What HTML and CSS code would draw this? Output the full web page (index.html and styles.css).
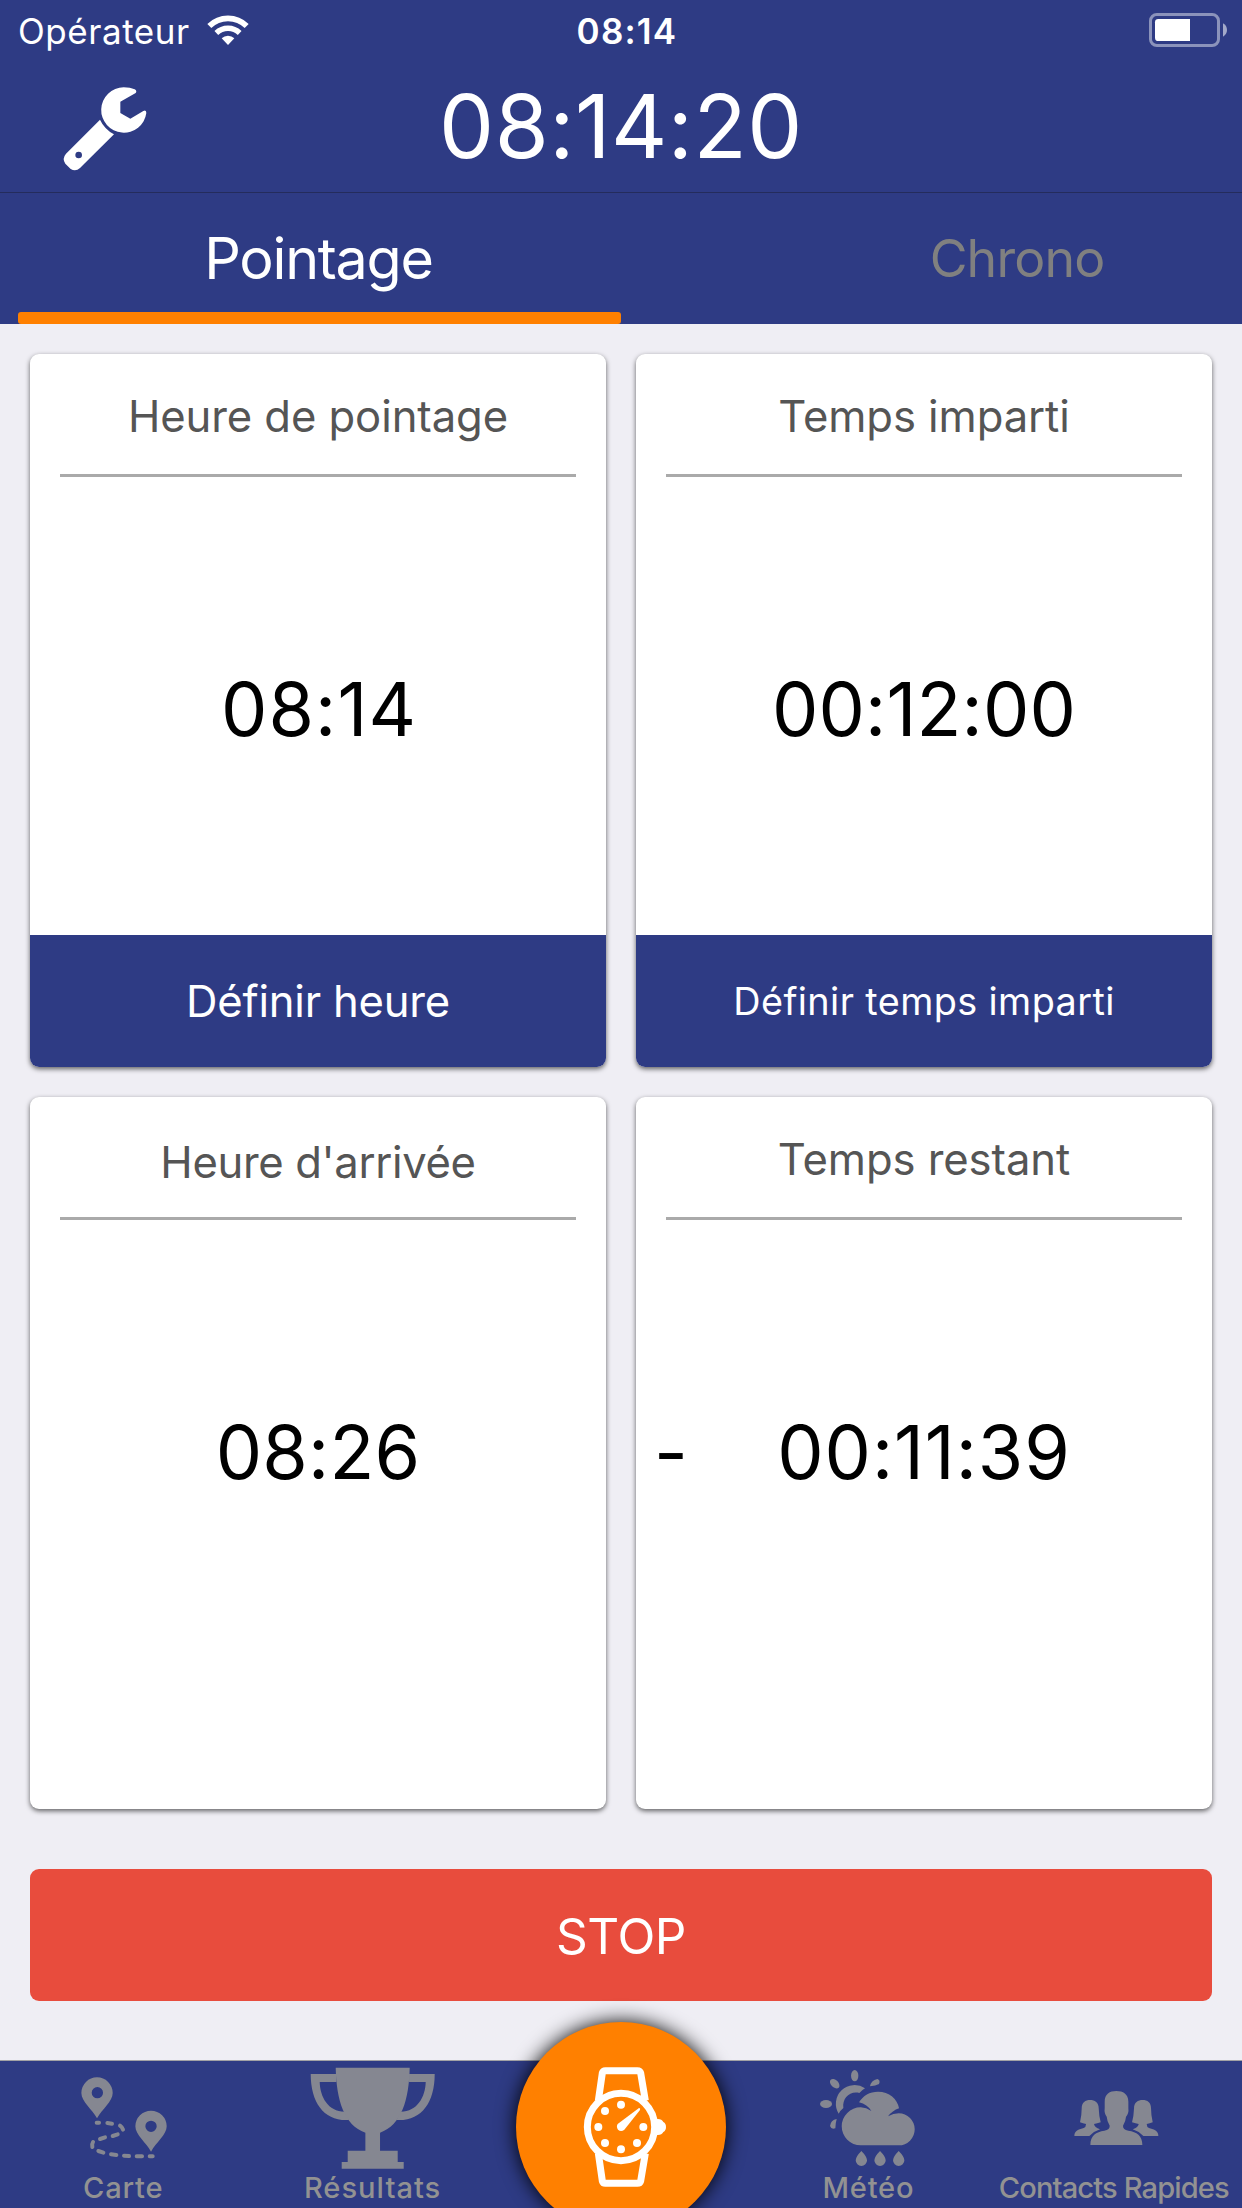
FILE: index.html
```html
<!DOCTYPE html>
<html lang="fr">
<head>
<meta charset="utf-8">
<title>Pointage</title>
<link rel="stylesheet" href="styles.css">
</head>
<body>
<div class="screen">
  <header class="header">
    <div class="status">
      <div class="carrier">
        <span class="carrier-name">Opérateur</span>
        <svg class="wifi" viewBox="621 45 126 90"><g fill="none" stroke="#fff"><path stroke-width="17" d="M628 78A79.5 79.5 0 0 1 740 78"/><path stroke-width="16" d="M649 99A50 50 0 0 1 719 99"/></g><path fill="#fff" d="M684 135L665 115A27 27 0 0 1 703 115Z"/></svg>
      </div>
      <span class="status-time">08:14</span>
      <svg class="battery" viewBox="147 39 234 102"><rect x="151.500" y="43.500" width="204" height="93" rx="19" fill="none" stroke="#8b93bb" stroke-width="9"/><path fill="#fff" d="M175 57H270V123H175Q165 123 165 113V67Q165 57 175 57Z"/><path fill="#a3a9c9" d="M369 70Q381 77 381 90Q381 103 369 110Z"/></svg>
    </div>
    <div class="titlebar">
      <svg class="wrench" viewBox="190 260 252 252" fill="#fff"><path d="M408 278L362 304V338L392 355L431 332Q440 327 440 338A68 68 0 1 1 372 261Q392 261 405 267Q413 272 408 278Z"/><path fill-rule="evenodd" d="M301 358Q314 386 343 402L241 503Q228 515 213 506L197 490Q186 475 199 460ZM247 464A10 10 0 1 0 227 464A10 10 0 1 0 247 464Z"/></svg>
      <h1 class="clock">08:14:20</h1>
    </div>
  </header>

  <nav class="tabs">
    <a class="tab-active">Pointage</a>
    <a class="tab-next">Chrono</a>
  </nav>

  <main class="content">
    <div class="cards">
      <section class="card">
        <h2 class="card-title">Heure de pointage</h2>
        <div class="card-value wide">08:14</div>
        <button class="card-button">Définir heure</button>
      </section>
      <section class="card">
        <h2 class="card-title">Temps imparti</h2>
        <div class="card-value">00:12:00</div>
        <button class="card-button small">Définir temps imparti</button>
      </section>
      <section class="card">
        <h2 class="card-title lowered">Heure d'arrivée</h2>
        <div class="card-value">08:26</div>
      </section>
      <section class="card">
        <h2 class="card-title">Temps restant</h2>
        <div class="card-value remaining"><span class="sign">-</span>00:11:39</div>
      </section>
    </div>
    <button class="stop">STOP</button>
  </main>

  <footer class="tabbar">
    <a class="item">
      <svg class="item-icon" viewBox="0 33 745 318" fill="#858791"><path fill-rule="evenodd" d="M291 205C277 178 244 155 244 129A47 47 0 0 1 338 129C338 155 305 178 291 205ZM309 128A17 17 0 1 0 275 128A17 17 0 1 0 309 128Z"/><path fill-rule="evenodd" d="M453 305C439 278 406 255 406 229A47 47 0 0 1 500 229C500 255 467 278 453 305ZM470 229A17 17 0 1 0 436 229A17 17 0 1 0 470 229Z"/><g fill="none" stroke="#858791" stroke-width="12" stroke-linecap="round"><path d="M290 218H297M322 219L336 221M360 227Q367 232 369 239M353 253L338 258M315 262L300 267M279 276Q275 282 277 291M295 303L310 308M333 313L349 315M372 317L387 318M410 319H426M449 319H458"/></g></svg>
      <span class="item-label">Carte</span>
    </a>
    <a class="item">
      <svg class="item-icon" viewBox="-95 33 745 318" fill="#858791"><path d="M168 53H390C388 150 365 225 301 248V302H354V336H372V356H186V336H204V302H257V248C193 225 170 150 168 53Z"/><path d="M93 72H170V96H120C121 140 145 185 195 185L208 210C135 215 93 160 93 72Z"/><path d="M465 72H388V96H438C437 140 413 185 363 185L350 210C423 215 465 160 465 72Z"/></svg>
      <span class="item-label spaced">Résultats</span>
    </a>
    <div class="item">
      <a class="fab" aria-label="Chronométrage">
        <svg class="watch" viewBox="48 66 630 630"><g fill="none" stroke="#fff" stroke-width="21"><circle cx="363" cy="381" r="101"/><path d="M295 302L307 219Q309 212 316 212H412Q420 212 422 219L436 302"/><path d="M295 460L307 543Q309 550 316 550H412Q420 550 422 543L436 460"/></g><g fill="#fff"><path d="M465 358Q484 354 490 366Q498 370 498 381Q498 392 490 396Q484 408 465 404Z"/><circle cx="363" cy="314" r="12"/><circle cx="315" cy="333" r="12"/><circle cx="295" cy="381" r="12"/><circle cx="430" cy="381" r="12"/><circle cx="315" cy="429" r="12"/><circle cx="411" cy="429" r="12"/><circle cx="363" cy="448" r="12"/><path d="M353 372L417 324Q422 324 420 330L373 389Q363 397 354 389Q348 380 353 372Z"/></g></svg>
      </a>
    </div>
    <a class="item">
      <svg class="item-icon" viewBox="-164 33 745 318" fill="#858791"><ellipse cx="165" cy="77" rx="11" ry="17"/><ellipse cx="105" cy="101" rx="11" ry="17" transform="rotate(-45 105 101)"/><path d="M211 109Q214 91 233 87Q243 90 238 102Q228 108 211 109Z"/><ellipse cx="79" cy="162" rx="18" ry="12"/><path d="M111 207Q93 210 91 228Q95 240 107 235Q107 220 111 207Z"/><path d="M196 115A56 56 0 0 0 117 191Q122 181 131 174C127 145 150 122 179 129Q186 121 196 115Z"/><path d="M298 175Q278 182 265 199Q281 190 297 190A48 48 0 0 1 297 286H183A57 57 0 0 1 183 172Q200 173 215 183Q203 163 178 157C190 137 210 125 235 125C268 125 294 147 298 175Z"/><path d="M185 303Q202 320 202 331A17 17 0 0 1 168 331Q168 320 185 303ZM241 303Q258 320 258 331A17 17 0 0 1 224 331Q224 320 241 303ZM297 303Q314 320 314 331A17 17 0 0 1 280 331Q280 320 297 303Z"/></svg>
      <span class="item-label">Météo</span>
    </a>
    <a class="item">
      <svg class="item-icon" viewBox="41 33 745 318" fill="#858791"><path d="M330 285C330 256 347 246 372 242Q389 239 388 227Q380 214 379 200Q371 190 373 174V155C373 132 388 123 408 123C428 123 444 132 444 155V174Q446 190 437 200Q436 214 428 227Q427 239 444 242C469 246 486 256 486 285Z"/><path d="M299 217Q304 195 304 175C304 157 315 150 329 150C343 150 355 157 355 175Q356 200 361 217Q350 221 341 222Q342 232 359 238Q340 244 327 258H282C282 240 298 238 310 234Q317 231 317 222Q308 221 299 217Z"/><path d="M517 217Q512 195 512 175C512 157 501 150 487 150C473 150 461 157 461 175Q460 200 455 217Q466 221 475 222Q474 232 457 238Q476 244 489 258H534C534 240 518 238 506 234Q499 231 499 222Q508 221 517 217Z"/></svg>
      <span class="item-label tight">Contacts Rapides</span>
    </a>
  </footer>
</div>
</body>
</html>
```
FILE: styles.css
```css
* { box-sizing: border-box; }

body {
  margin: 0;
  font-family: "Inter", "Liberation Sans", sans-serif;
  background: #efeef4;
}

h1, h2 { margin: 0; font-weight: 400; }

button {
  border: 0;
  padding: 0;
  font-family: inherit;
  color: #fff;
}

.screen {
  display: flex;
  flex-direction: column;
  width: 1242px;
  height: 2208px;
  overflow: hidden;
}

/* Header */
.header {
  height: 193px;
  background: #2e3b84;
  border-bottom: 1px solid #242c5c;
  color: #fff;
}

.status {
  display: grid;
  grid-template-columns: 1fr auto 1fr;
  align-items: center;
  height: 62px;
  padding: 0 15px 0 18px;
  font-size: 35px;
}

.carrier { display: flex; align-items: center; gap: 17px; }
.carrier-name { letter-spacing: 0.55px; }
.wifi { width: 42px; height: 30px; margin-bottom: 2px; }
.status-time { font-weight: 600; letter-spacing: 1.2px; margin-left: 9px; }
.battery { width: 78px; height: 34px; justify-self: end; margin-bottom: 2px; }

.titlebar {
  display: grid;
  grid-template-columns: 1fr auto 1fr;
  align-items: center;
  height: 129px;
  padding-left: 63px;
  padding-right: 63px;
}

.wrench { width: 84px; height: 84px; margin-top: 4px; }

.clock {
  font-size: 87.3px;
  line-height: 129px;
  letter-spacing: 0.54px;
}

/* Tabs */
.tabs {
  display: flex;
  height: 131px;
  padding-left: 18px;
  background: #2e3b84;
  line-height: 131px;
  text-align: center;
}

.tab-active {
  display: flex;
  flex-direction: column;
  width: 603px;
  font-size: 57.4px;
  letter-spacing: -1.25px;
  text-indent: -2px;
  color: #fff;
}

.tab-active::after {
  content: "";
  height: 12px;
  margin-top: -12px;
  border-radius: 3px;
  background: #ff8000;
}

.tab-next {
  flex: 1;
  padding-left: 171px;
  font-size: 51.8px;
  letter-spacing: -0.85px;
  line-height: 130px;
  color: #808080;
}

/* Cards */
.content { flex: 1; padding: 30px 30px 0; }

.cards {
  display: grid;
  grid-template-columns: 1fr 1fr;
  grid-template-rows: 713px 712px;
  gap: 30px;
}

.card {
  display: flex;
  flex-direction: column;
  overflow: hidden;
  border-radius: 9px;
  background: #fff;
  box-shadow: 0 2px 5px rgba(0, 0, 0, 0.6);
}

.card-title {
  height: 123px;
  margin: 0 30px;
  padding-top: 5px;
  border-bottom: 3px solid #aaa;
  font-size: 43.6px;
  line-height: 116px;
  letter-spacing: -0.08px;
  text-align: center;
  color: #555;
}

.card-title.lowered { padding-top: 8px; letter-spacing: -0.34px; }

.card-value {
  height: 458px;
  padding-top: 7px;
  font-size: 73.6px;
  line-height: 452px;
  letter-spacing: 0.15px;
  text-align: center;
  color: #000;
}

.card-value.wide { letter-spacing: 1.1px; text-indent: 2px; }
.card-value.remaining { position: relative; letter-spacing: 0.9px; }
.sign { position: absolute; left: 18px; }

.card-button {
  height: 132px;
  background: #2e3b84;
  font-size: 43.6px;
  letter-spacing: -0.2px;
}

.card-button.small { font-size: 37.8px; letter-spacing: 0.4px; }

.stop {
  display: block;
  width: 100%;
  height: 132px;
  margin-top: 60px;
  padding-top: 2px;
  border-radius: 9px;
  background: #e84c3d;
  font-size: 49.5px;
  letter-spacing: -0.4px;
}

/* Bottom bar */
.tabbar {
  display: grid;
  grid-template-columns: repeat(5, 1fr);
  height: 148px;
  border-top: 1px solid #a2a2a5;
  background: #2e3b84;
}

.item {
  position: relative;
  display: flex;
  flex-direction: column;
  align-items: center;
  color: #929292;
}

.item-icon { width: 100%; height: 106px; overflow: visible; }

.item-label {
  margin-right: 2px;
  font-size: 29.1px;
  font-weight: 500;
  line-height: 41px;
  letter-spacing: 0.8px;
  white-space: nowrap;
}

.item-label.spaced { letter-spacing: 1px; margin-right: 0; }
.item-label.tight { letter-spacing: -0.88px; margin-right: 8px; }

.fab {
  position: absolute;
  top: -39px;
  left: 50%;
  width: 210px;
  height: 210px;
  margin-left: -105px;
  border-radius: 50%;
  background: #ff8000;
  box-shadow: 0 0 20px #000;
}

.watch { display: block; width: 210px; height: 210px; }
```
